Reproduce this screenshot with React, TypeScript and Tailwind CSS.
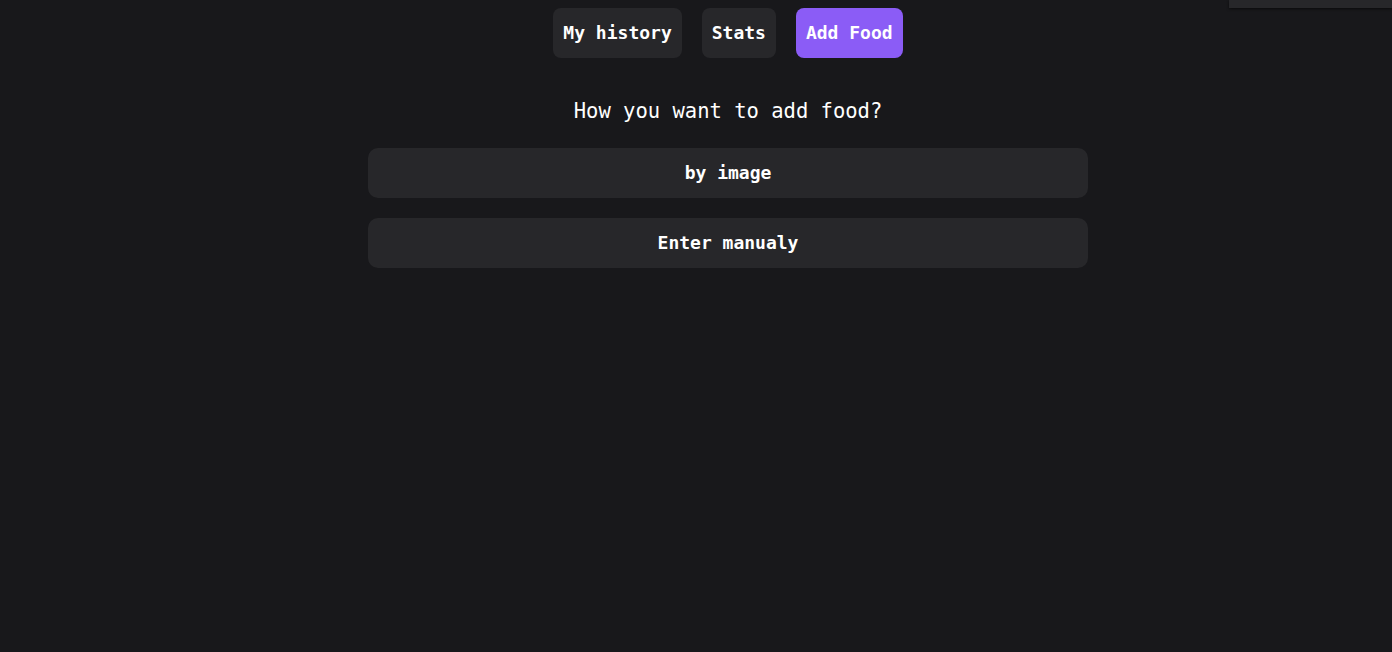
import { useState } from 'react';

const TABS = ['My history', 'Stats', 'Add Food'];

export default function App() {
  const [tab, setTab] = useState('Add Food');

  return (
    <div
      className="relative min-h-screen bg-[#18181b] pl-16 pt-2 text-white"
      style={{ fontFamily: '"DejaVu Sans Mono", "Liberation Mono", monospace' }}
    >
      {/* top-right floating panel edge */}
      <div className="absolute right-0 top-0 h-2 w-[163px] bg-[#27272a] shadow-[0_1px_3px_rgba(0,0,0,0.6)]" />

      <div className="flex flex-col items-center">
        <nav className="flex gap-5">
          {TABS.map((t) => (
            <button
              key={t}
              onClick={() => setTab(t)}
              className={`h-[50px] rounded-lg px-[10px] pb-[2px] text-[18px] font-semibold ${
                tab === t ? 'bg-[#8b5cf6]' : 'bg-[#27272a]'
              }`}
            >
              {t}
            </button>
          ))}
        </nav>

        <h2 className="mt-[39px] text-[20.5px] leading-7">How you want to add food?</h2>

        <div className="mt-[23px] flex w-[720px] flex-col gap-5">
          <button className="h-[50px] rounded-[10px] bg-[#27272a] pb-[2px] text-[18px] font-semibold">
            by image
          </button>
          <button className="h-[50px] rounded-[10px] bg-[#27272a] pb-[2px] text-[18px] font-semibold">
            Enter manualy
          </button>
        </div>
      </div>
    </div>
  );
}
